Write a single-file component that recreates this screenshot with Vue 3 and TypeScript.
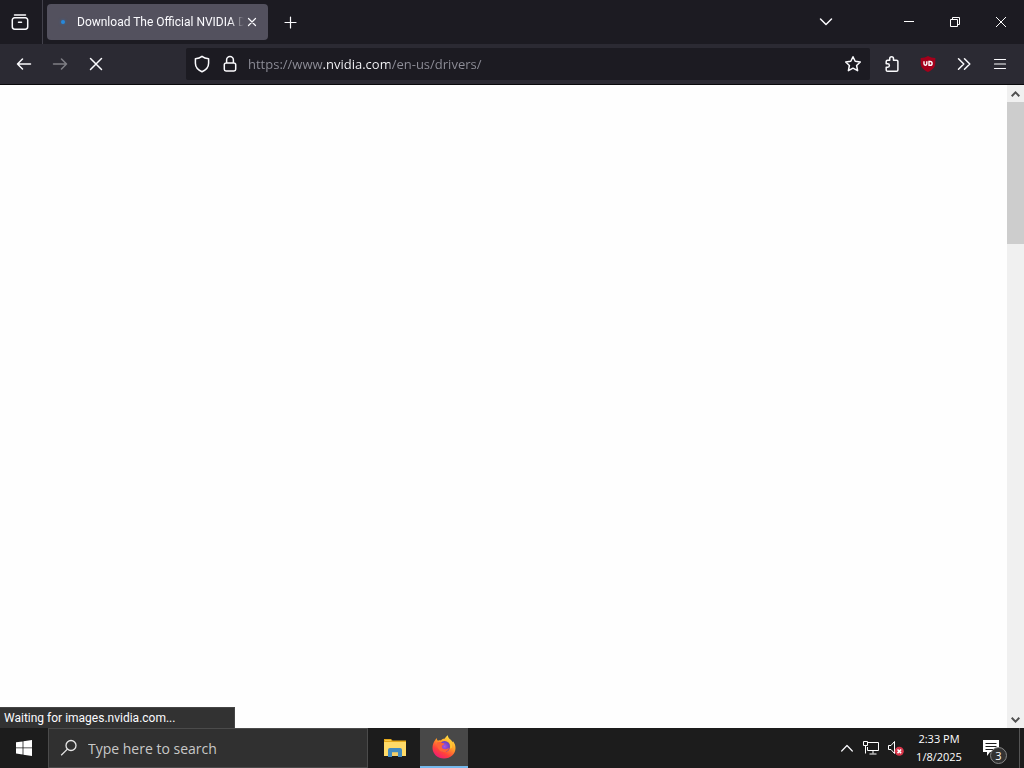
<script setup lang="ts">
import { ref } from 'vue'

const url = ref('https://www.nvidia.com/en-us/drivers/')
const query = ref('')
const tabTitle = 'Download The Official NVIDIA Drivers'
const status = 'Waiting for images.nvidia.com...'
const time = '2:33 PM'
const date = '1/8/2025'
const notifications = 3
</script>

<template>
  <div class="desktop">
    <header class="tabs">
      <button class="view" aria-label="Firefox View">
        <svg width="18" height="18" viewBox="0 0 18 18" class="line"><path d="M3.5 2h11M3.5 4.8h11a2.2 2.2 0 0 1 2.2 2.2v6.8a2.4 2.4 0 0 1-2.400 2.400H3.700a2.400 2.400 0 0 1-2.400-2.400V7a2.200 2.200 0 0 1 2.200-2.200zM7.500 9.200h3" /></svg>
      </button>
      <div class="tab">
        <span class="loading"></span>
        <span class="title">{{ tabTitle }}</span>
        <button class="close" aria-label="Close tab">
          <svg width="10" height="10" viewBox="0 0 10 10" class="line thin"><path d="M1.500 1.500l7 7M8.500 1.500l-7 7" /></svg>
        </button>
      </div>
      <button class="add" aria-label="New tab">
        <svg width="13" height="13" viewBox="0 0 13 13" class="line thin"><path d="M6.500 1v11M1 6.500h11" /></svg>
      </button>
      <span class="spacer"></span>
      <button class="all" aria-label="List all tabs">
        <svg width="14" height="14" viewBox="0 0 14 14" class="line"><path d="M1.500 4L7 9.500 12.500 4" /></svg>
      </button>
      <div class="window">
        <button aria-label="Minimize"><svg width="10" height="10" viewBox="0 0 10 10" class="hair"><path d="M0 4.500h10" /></svg></button>
        <button aria-label="Restore"><svg width="10" height="10" viewBox="0 0 10 10" class="hair"><path d="M.5 2.500h7v7h-7zM2.500 2.500v-2h7v7h-2" /></svg></button>
        <button aria-label="Close"><svg width="12" height="12" viewBox="0 0 12 12" class="hair"><path d="M1 1l10 10M11 1L1 11" /></svg></button>
      </div>
    </header>

    <nav class="toolbar">
      <div class="history">
        <button aria-label="Back"><svg width="16" height="16" viewBox="0 0 16 16" class="line"><path d="M14.500 8h-13M6.500 3L1.500 8l5 5" /></svg></button>
        <button aria-label="Forward" disabled><svg width="16" height="16" viewBox="0 0 16 16" class="line"><path d="M1.500 8h13M9.500 3l5 5-5 5" /></svg></button>
        <button aria-label="Stop"><svg width="16" height="16" viewBox="0 0 16 16" class="line"><path d="M2.500 2.500l11 11M13.500 2.500l-11 11" /></svg></button>
      </div>
      <div class="address">
        <button aria-label="Tracking protection"><svg width="16" height="18" viewBox="0 0 16 18" class="line"><path d="M8 1.300c2 1.600 4 2.200 6.600 2.500v4.400c0 4-2.800 6.800-6.600 8.500-3.800-1.700-6.600-4.500-6.600-8.500V3.800C4 3.500 6 2.900 8 1.300z" /></svg></button>
        <button aria-label="Connection secure"><svg width="14" height="18" viewBox="0 0 14 18" class="line"><path d="M3.600 8V5a3.400 3.400 0 0 1 6.800 0v3M3 8h8a1.700 1.700 0 0 1 1.700 1.700v4.600A1.700 1.700 0 0 1 11 16H3a1.700 1.700 0 0 1-1.700-1.700V9.700A1.700 1.700 0 0 1 3 8z" /></svg></button>
        <input v-model="url" class="url" aria-label="Address" spellcheck="false" />
        <button class="star" aria-label="Bookmark this page"><svg width="18" height="18" viewBox="0 0 18 18" class="line"><path d="M9 1.700l2.200 4.600 5.100.7-3.700 3.500 1 5.200L9 13.200l-4.600 2.500 1-5.200L1.700 7l5.100-.7z" /></svg></button>
      </div>
      <div class="extras">
        <button aria-label="Extensions"><svg width="16" height="18" viewBox="0 0 16 18" class="line"><path d="M5.700 5.200V3.700a1.900 1.900 0 0 1 3.800 0v1.500h3a1.400 1.400 0 0 1 1.400 1.400v8.300a1.400 1.400 0 0 1-1.400 1.400H3.600a1.400 1.400 0 0 1-1.400-1.400v-2.700h1.500a1.700 1.700 0 0 0 0-3.400H2.200V6.600a1.400 1.400 0 0 1 1.400-1.400z" /></svg></button>
        <button aria-label="uBlock Origin"><svg width="16" height="16" viewBox="0 0 16 16"><path d="M8 0c2 1.300 4.400 1.900 7.300 2v5c0 4.400-2.600 6.700-7.300 9C3.300 13.700.7 11.400.7 7V2C3.600 1.900 6 1.300 8 0z" fill="#a3001b" /><path d="M4 5.300v2.500a1.400 1.400 0 0 0 2.800 0V5.300M9 5.500h1.200a1.900 1.900 0 0 1 0 3.800H9z" fill="none" stroke="#fff" stroke-width="1.400" /></svg></button>
        <button aria-label="More tools"><svg width="16" height="16" viewBox="0 0 16 16" class="line"><path d="M2.500 2.700L7.800 8l-5.300 5.300M8.500 2.700L13.800 8l-5.300 5.300" /></svg></button>
        <button aria-label="Open menu"><svg width="14" height="12" viewBox="0 0 14 12" class="line thin"><path d="M1.500 1.500h11M1.500 6h11M1.500 10.500h11" /></svg></button>
      </div>
    </nav>

    <main class="page">
      <div class="document"></div>
      <div class="scroll">
        <button aria-label="Scroll up"><svg width="9" height="6" viewBox="0 0 9 6"><path d="M.7 5.200l3.800-3.800 3.800 3.800" /></svg></button>
        <div class="track"><div class="thumb"></div></div>
        <button aria-label="Scroll down"><svg width="9" height="6" viewBox="0 0 9 6"><path d="M.7.8l3.800 3.800L8.300.8" /></svg></button>
      </div>
      <div class="status" role="status">{{ status }}</div>
    </main>

    <footer class="taskbar">
      <button class="start" aria-label="Start"><svg width="16" height="16" viewBox="0 0 16 16" fill="#fff"><path d="M0 2.300l6.600-.9v6.100H0zM7.400 1.300L16 0v7.500H7.400zM0 8.300h6.600v6.200L0 13.600zM7.400 8.300H16V16l-8.600-1.300z" /></svg></button>
      <label class="search">
        <svg width="18" height="18" viewBox="0 0 18 18"><circle cx="11" cy="6.500" r="5" /><path d="M7.400 10.100L1.200 16.300" /></svg>
        <input v-model="query" placeholder="Type here to search" aria-label="Search" />
      </label>
      <button class="app" aria-label="File Explorer">
        <svg width="22" height="20" viewBox="0 0 22 20">
          <path d="M0 1h7l1.500 1.500H22V18H0z" fill="#e5a91b" />
          <path d="M0 4h22v14H0z" fill="#ffdb68" />
          <path d="M1 2h6v1H1z" fill="#f7c84b" />
          <path d="M4 19v-7a2 2 0 0 1 2-2h10a2 2 0 0 1 2 2v7h-4v-4.500H8V19z" fill="#438bc0" />
          <path d="M8 14.500h6V18H8z" fill="#f5cf67" />
        </svg>
      </button>
      <button class="app active" aria-label="Firefox">
        <svg width="24" height="24" viewBox="0 0 24 24">
          <defs>
            <linearGradient id="flame" x1=".8" y1="0" x2=".2" y2="1"><stop offset="0" stop-color="#ffed46" /><stop offset=".4" stop-color="#ff9b28" /><stop offset=".7" stop-color="#ff423b" /><stop offset="1" stop-color="#ed147f" /></linearGradient>
            <radialGradient id="globe"><stop offset="0" stop-color="#aa55df" /><stop offset="1" stop-color="#633fc2" /></radialGradient>
          </defs>
          <path d="M3.200 5C3.600 4.200 4.200 3.500 4.800 3c0 1.400.5 2.100 1.200 2.700 1-.4 2-.5 3-.3 1.200-1.500 2.800-1.700 3.500-1.600C13.300 2.600 14.400 1 15.800.2c.2 2.300 1.500 3.300 3 4.600.8.700 1.400 1.500 1.700 2.500.4-.4.400-.8.400-1.300 1.700 2.200 2.600 4.300 2.600 7C23.500 19 18.500 23.500 12 23.500S.5 18.800.5 13c0-3 .9-5.700 2.700-8z" fill="url(#flame)" />
          <circle cx="12.500" cy="11.500" r="5.500" fill="url(#globe)" />
          <path d="M5 7.500c2-1 3.800-.7 5.200.5l2.300.5c-.2 1.200-1.500 1.600-2.600 2.300-.3 1.600.6 3 2.200 3.300 1.600.3 3.200-.2 5-1.400-.7 3.100-2.900 4.600-5.600 4.400C7.600 16.800 4.800 13.300 5 7.500z" fill="#ff6336" />
          <path d="M14 4.500c3.800 1.900 5.300 5.200 4 9.200l2-1.200c.5-3.800-1.200-6.700-4.700-8.700z" fill="#ffc833" />
        </svg>
      </button>
      <span class="spacer"></span>
      <div class="tray">
        <button class="up" aria-label="Show hidden icons"><svg width="12" height="8" viewBox="0 0 12 8" class="line thin"><path d="M.7 7L6 1.500 11.300 7" /></svg></button>
        <button class="net" aria-label="Network"><svg width="16" height="14" viewBox="0 0 16 14" class="hair"><path d="M5 1.500h10.500v8H4.500V6M10 9.500v3M6.500 13h7M.5.500h4v4h-4zM2.500 4.500v8" /></svg></button>
        <button class="sound" aria-label="Volume muted"><svg width="17" height="16" viewBox="0 0 17 16"><path d="M1.500 5.500H4l3.500-4v12L4 9.500H1.500z" fill="none" stroke="#fff" /><circle cx="12.300" cy="11.300" r="4.500" fill="#d8364a" /><path d="M10.500 9.500l3.600 3.600M14.100 9.500l-3.600 3.600" stroke="#fff" stroke-width="1.500" /></svg></button>
        <button class="clock"><span>{{ time }}</span><span>{{ date }}</span></button>
        <button class="action" aria-label="Notifications">
          <svg width="16" height="16" viewBox="0 0 16 16"><path d="M0 0h16v12H7l-3 4v-4H0z" fill="#fff" /><path d="M2.500 3.500h11M2.500 6.500h11M2.500 9.500h11" stroke="#1c1c1c" /></svg>
          <span class="count">{{ notifications }}</span>
        </button>
        <button class="peek" aria-label="Show desktop"></button>
      </div>
    </footer>
  </div>
</template>

<style>
body { margin: 0; }
</style>

<style scoped>
* { box-sizing: border-box; }
.desktop { height: 100vh; display: flex; flex-direction: column; overflow: hidden; font-family: "Open Sans", "Noto Sans", sans-serif; font-size: 12px; color: #fbfbfe; }
button { display: flex; align-items: center; justify-content: center; flex: none; padding: 0; border: 0; background: none; color: inherit; font: inherit; }
input { min-width: 0; padding: 0; border: 0; outline: 0; background: none; color: inherit; font: inherit; }
svg { display: block; flex: none; }
.line { fill: none; stroke: #fbfbfe; stroke-width: 1.5; stroke-linecap: round; stroke-linejoin: round; }
.thin { stroke-width: 1.2; }
.hair { fill: none; stroke: #fff; stroke-width: 1; }
.spacer { flex: 1; }

.tabs { display: flex; align-items: center; flex: none; height: 44px; background: #1c1b22; }
.view { width: 43px; height: 44px; padding-right: 3px; border-right: 1px solid #42414b; }
.tab { display: flex; align-items: center; width: 221px; height: 36px; margin-left: 4px; padding: 0 8px 0 14px; border-radius: 4px; background: #53515e; }
.loading { flex: none; width: 4px; height: 4px; margin-right: 12px; border-radius: 2px; background: #2789db; box-shadow: 0 0 3px #306ca8; }
.title, .status { font-family: Roboto, "Open Sans", sans-serif; }
.title { flex: 1; min-width: 0; overflow: hidden; white-space: nowrap; mask-image: linear-gradient(to left, transparent, #000 14px); }
.close { width: 16px; height: 20px; }
.add { width: 36px; height: 36px; margin-left: 4px; }
.all { width: 36px; height: 36px; margin-right: 42px; }
.window { display: flex; }
.window button { width: 46px; height: 44px; }

.toolbar { display: flex; align-items: center; flex: none; height: 41px; border-bottom: 1px solid #09090c; background: #2b2a33; }
.history { display: flex; width: 186px; padding-left: 6px; }
.history button { width: 36px; height: 36px; }
.history button:disabled { opacity: 0.4; }
.address { display: flex; align-items: center; flex: 1; min-width: 0; height: 32px; padding-left: 2px; border-radius: 2px; background: #1c1b22; }
.address button { width: 28px; height: 32px; }
.address .star { width: 34px; }
.url { flex: 1; height: 26px; margin-left: 4px; font-size: 13px; background: linear-gradient(to right, #8f8f99 75px, #fbfbfe 75px, #fbfbfe 142px, #8f8f99 142px); background-clip: text; -webkit-background-clip: text; -webkit-text-fill-color: transparent; }
.extras { display: flex; padding: 0 6px 0 4px; }
.extras button { width: 36px; height: 36px; }

.page { position: relative; display: flex; flex: 1; min-height: 0; background: #fefefe; }
.document { flex: 1; }
.scroll { display: flex; flex-direction: column; width: 17px; background: #f0f0f0; }
.scroll button { height: 17px; }
.scroll path { fill: none; stroke: #505050; stroke-width: 2; }
.track { flex: 1; }
.thumb { height: 23.3%; background: #cdcdcd; }
.status { position: absolute; left: 0; bottom: 0; width: 235px; height: 21px; padding-left: 4px; border: 1px solid #454545; border-width: 1px 1px 0 0; background: #323232; line-height: 21px; white-space: nowrap; }

.taskbar { display: flex; align-items: center; flex: none; height: 40px; background: #1c1c1c; color: #fff; }
.start { width: 48px; height: 40px; }
.search { display: flex; align-items: center; width: 320px; height: 40px; padding-left: 11px; border: 1px solid #4b4b4b; background: #303030; }
.search svg { fill: none; stroke: #e5e5e5; stroke-width: 1.3; }
.search input { flex: 1; height: 28px; margin-left: 10px; font-size: 14px; }
.search input::placeholder { color: #c8c8c8; opacity: 1; }
.app { width: 48px; height: 40px; margin-left: 3px; }
.app.active { margin-left: 1px; border-bottom: 2px solid #76b9ed; background: #484848; }
.tray { display: flex; align-items: center; height: 40px; }
.tray button { height: 40px; }
.tray .up { width: 24px; }
.tray .net { width: 24px; }
.tray .sound { width: 24px; }
.tray .clock { flex-direction: column; width: 64px; font-size: 11px; line-height: 18px; }
.tray .action { position: relative; width: 48px; padding-right: 8px; }
.count { position: absolute; left: 19px; top: 19px; width: 17px; height: 17px; border: 1px solid #888; border-radius: 50%; background: #333; font-size: 11px; line-height: 15px; text-align: center; }
.tray .peek { width: 5px; border-left: 1px solid #555; }
</style>
